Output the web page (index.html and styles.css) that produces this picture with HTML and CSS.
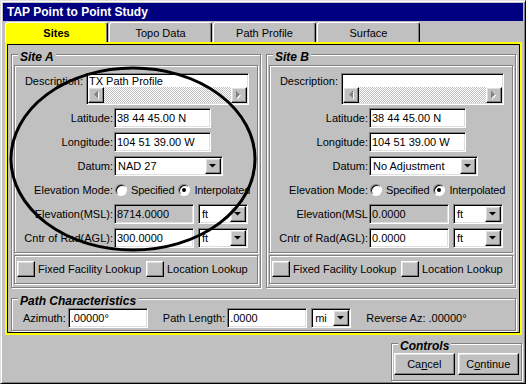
FILE: index.html
```html
<!DOCTYPE html>
<html lang="en">
<head>
  <meta charset="UTF-8" />
  <title>TAP Point to Point Study</title>
  <link rel="stylesheet" href="styles.css">
</head>
<body>

<div class="window">
  <div class="titlebar">TAP Point to Point Study</div>

  <div class="tabs">
    <div class="tab active">Sites</div>
    <div class="tab">Topo Data</div>
    <div class="tab">Path Profile</div>
    <div class="tab">Surface</div>
  </div>

  <div class="panel">
    <div class="sites">

      <!-- Site A -->
      <div class="group site">
        <span class="legend">Site A</span>
        <div class="frame fields">
          <div class="desc-row">
            <span class="desc-label">Description:</span>
            <div class="desc-box">
              <div class="desc-text">TX Path Profile</div>
              <div class="hscroll">
                <span class="raised sbtn">
                  <svg width="14" height="14" viewBox="0 0 14 14"><polygon points="6,7.5 10,3.5 10,11.5" fill="#fff"/><polygon points="5,6.5 9,2.5 9,10.5" fill="#808080"/></svg>
                </span>
                <span class="track"></span>
                <span class="raised sbtn">
                  <svg width="14" height="14" viewBox="0 0 14 14"><polygon points="9,7.5 5,3.5 5,11.5" fill="#fff"/><polygon points="8,6.5 4,2.5 4,10.5" fill="#808080"/></svg>
                </span>
              </div>
            </div>
          </div>
          <div class="grid">
            <label>Latitude:</label>
            <input class="field w-coord" type="text" value="38 44 45.00 N" />
            <label>Longitude:</label>
            <input class="field w-coord" type="text" value="104 51 39.00 W" />
            <label>Datum:</label>
            <div class="combo w-datum"><span>NAD 27</span><span class="raised drop"><svg width="14" height="14" viewBox="0 0 14 14"><polygon points="3,5 10,5 6.5,8.5"/></svg></span></div>
            <label>Elevation Mode:</label>
            <div class="radios">
              <span class="radio"></span><span class="rlabel">Specified</span>
              <span class="radio on"></span><span>Interpolated</span>
            </div>
            <label>Elevation(MSL):</label>
            <div class="pair">
              <input class="field w-num disabled" type="text" value="8714.0000" readonly />
              <div class="combo w-unit"><span>ft</span><span class="raised drop"><svg width="14" height="14" viewBox="0 0 14 14"><polygon points="3,5 10,5 6.5,8.5"/></svg></span></div>
            </div>
            <label>Cntr of Rad(AGL):</label>
            <div class="pair">
              <input class="field w-num" type="text" value="300.0000" />
              <div class="combo w-unit"><span>ft</span><span class="raised drop"><svg width="14" height="14" viewBox="0 0 14 14"><polygon points="3,5 10,5 6.5,8.5"/></svg></span></div>
            </div>
          </div>
        </div>
        <div class="frame lookups">
          <span class="lookup first"><span class="raised sq"></span>Fixed Facility Lookup</span>
          <span class="lookup"><span class="raised sq"></span>Location Lookup</span>
        </div>
      </div>

      <!-- Site B -->
      <div class="group site">
        <span class="legend">Site B</span>
        <div class="frame fields">
          <div class="desc-row">
            <span class="desc-label">Description:</span>
            <div class="desc-box">
              <div class="desc-text"></div>
              <div class="hscroll">
                <span class="raised sbtn">
                  <svg width="14" height="14" viewBox="0 0 14 14"><polygon points="6,7.5 10,3.5 10,11.5" fill="#fff"/><polygon points="5,6.5 9,2.5 9,10.5" fill="#808080"/></svg>
                </span>
                <span class="track"></span>
                <span class="raised sbtn">
                  <svg width="14" height="14" viewBox="0 0 14 14"><polygon points="9,7.5 5,3.5 5,11.5" fill="#fff"/><polygon points="8,6.5 4,2.5 4,10.5" fill="#808080"/></svg>
                </span>
              </div>
            </div>
          </div>
          <div class="grid">
            <label>Latitude:</label>
            <input class="field w-coord" type="text" value="38 44 45.00 N" />
            <label>Longitude:</label>
            <input class="field w-coord" type="text" value="104 51 39.00 W" />
            <label>Datum:</label>
            <div class="combo w-datum"><span>No Adjustment</span><span class="raised drop"><svg width="14" height="14" viewBox="0 0 14 14"><polygon points="3,5 10,5 6.5,8.5"/></svg></span></div>
            <label>Elevation Mode:</label>
            <div class="radios">
              <span class="radio"></span><span class="rlabel">Specified</span>
              <span class="radio on"></span><span>Interpolated</span>
            </div>
            <label>Elevation(MSL</label>
            <div class="pair">
              <input class="field w-num disabled" type="text" value="0.0000" readonly />
              <div class="combo w-unit"><span>ft</span><span class="raised drop"><svg width="14" height="14" viewBox="0 0 14 14"><polygon points="3,5 10,5 6.5,8.5"/></svg></span></div>
            </div>
            <label>Cntr of Rad(AGL):</label>
            <div class="pair">
              <input class="field w-num" type="text" value="0.0000" />
              <div class="combo w-unit"><span>ft</span><span class="raised drop"><svg width="14" height="14" viewBox="0 0 14 14"><polygon points="3,5 10,5 6.5,8.5"/></svg></span></div>
            </div>
          </div>
        </div>
        <div class="frame lookups">
          <span class="lookup first"><span class="raised sq"></span>Fixed Facility Lookup</span>
          <span class="lookup"><span class="raised sq"></span>Location Lookup</span>
        </div>
      </div>

    </div>

    <div class="group path">
      <span class="legend">Path Characteristics</span>
      <div class="path-row">
        <span>Azimuth:</span>
        <input class="field w-num az" type="text" value=".00000°" />
        <span class="len-label">Path Length:</span>
        <input class="field w-num len" type="text" value=".0000" />
        <div class="combo w-mi"><span>mi</span><span class="raised drop"><svg width="14" height="14" viewBox="0 0 14 14"><polygon points="3,5 10,5 6.5,8.5"/></svg></span></div>
        <span class="rev">Reverse Az: .00000°</span>
      </div>
    </div>
  </div>

  <div class="bottom">
    <div class="group controls">
      <span class="legend">Controls</span>
      <button class="raised btn cancel">Ca<u>n</u>cel</button>
      <button class="raised btn cont">C<u>o</u>ntinue</button>
    </div>
  </div>

  <svg class="mark" width="526" height="384" viewBox="0 0 526 384">
    <ellipse cx="133" cy="159" rx="122" ry="91" fill="none" stroke="#000" stroke-width="3"/>
  </svg>
</div>

</body>
</html>
```

FILE: styles.css
```css
* {
  box-sizing: border-box;
}

body {
  margin: 0;
  background: #c0c0c0;
  font-family: "Liberation Sans", Arial, sans-serif;
  font-size: 11px;
  color: #000;
}

.window {
  position: relative;
  width: 526px;
  height: 384px;
  padding: 2px;
  border: 1px solid;
  border-color: #dfdfdf #000 #000 #dfdfdf;
  box-shadow: inset 1px 1px 0 #fff, inset -1px -1px 0 #808080;
}

.titlebar {
  height: 18px;
  padding-left: 4px;
  background: #000080;
  color: #fff;
  font-size: 12px;
  font-weight: bold;
  line-height: 18px;
}

/* tabs */
.tabs {
  display: flex;
  gap: 1px;
  margin: 1px 0 0 2px;
}

.tab {
  width: 103px;
  height: 20px;
  padding-top: 1px;
  border: 1px solid;
  border-bottom: 0;
  border-color: #fff #000 transparent #fff;
  border-radius: 3px 3px 0 0;
  box-shadow: inset -1px 0 0 #808080;
  text-align: center;
  line-height: 19px;
}

.tab.active {
  background: #ffff00;
  font-weight: bold;
}

.panel {
  height: 293px;
  margin: 0 1px 0 2px;
  padding: 10px 4px 2px;
  border: 2px solid #ffff00;
  box-shadow: inset 1px 1px 0 #000, inset -1px -1px 0 #000;
}

.sites {
  display: flex;
  gap: 5px;
}

/* etched group boxes */
.group,
.frame {
  border: 1px solid #808080;
  box-shadow: inset 1px 1px 0 #fff, 1px 1px 0 #fff;
}

.group {
  position: relative;
}

.legend {
  position: absolute;
  top: -5px;
  left: 6px;
  padding: 0 2px;
  background: #c0c0c0;
  font-size: 12px;
  font-style: italic;
  font-weight: bold;
  line-height: 14px;
}

.site {
  width: 250px;
  height: 234px;
  padding: 10px 2px 0;
}

.fields {
  height: 188px;
  padding-top: 7px;
}

.desc-row {
  display: flex;
  gap: 3px;
}

.desc-label {
  width: 68px;
  margin-top: 2px;
  text-align: right;
  line-height: 12px;
}

.desc-box {
  width: 163px;
  height: 32px;
  border: 1px solid;
  border-color: #808080 #fff #fff #808080;
  box-shadow: inset 1px 1px 0 #000, inset -1px -1px 0 #dfdfdf;
  background: #fff;
  padding: 1px;
}

.desc-text {
  height: 12px;
  padding-left: 1px;
  line-height: 12px;
}

.hscroll {
  display: flex;
  height: 16px;
}

.track {
  flex: 1;
  background: repeating-conic-gradient(#c0c0c0 0 25%, #fff 0 50%) 0 0 / 2px 2px;
}

.raised {
  background: #c0c0c0;
  border: 1px solid;
  border-color: #fff #000 #000 #fff;
  box-shadow: inset -1px -1px 0 #808080, inset 1px 1px 0 #dfdfdf;
}

.sbtn,
.drop {
  display: block;
  width: 16px;
  height: 16px;
}

.sbtn svg,
.drop svg {
  display: block;
}

.grid {
  display: grid;
  grid-template-columns: 98px auto;
  column-gap: 1px;
  row-gap: 4px;
  margin-top: 3px;
  align-items: center;
  justify-items: start;
}

.grid label {
  justify-self: end;
  line-height: 20px;
  white-space: nowrap;
}

.field {
  height: 20px;
  margin: 0;
  padding: 0 2px;
  border: 1px solid;
  border-color: #808080 #fff #fff #808080;
  box-shadow: inset 1px 1px 0 #000, inset -1px -1px 0 #dfdfdf;
  background: #fff;
  font: inherit;
  color: #000;
  outline: none;
}

.field.disabled {
  background: #c0c0c0;
}

.w-coord { width: 97px; }
.w-datum { width: 109px; }
.w-num { width: 80px; }
.w-unit { width: 50px; }
.w-mi { width: 40px; }

.combo {
  display: flex;
  justify-content: space-between;
  align-items: center;
  height: 20px;
  padding: 1px 1px 1px 3px;
  border: 1px solid;
  border-color: #808080 #fff #fff #808080;
  box-shadow: inset 1px 1px 0 #000, inset -1px -1px 0 #dfdfdf;
  background: #fff;
}

.pair {
  display: flex;
  gap: 4px;
}

.radios {
  display: flex;
  align-items: center;
  height: 20px;
  margin-left: 1px;
  letter-spacing: -0.2px;
}

.radio {
  position: relative;
  width: 12px;
  height: 12px;
  margin-right: 4px;
  border: 1px solid;
  border-color: #808080 #fff #fff #808080;
  border-radius: 50%;
  box-shadow: inset 1px 1px 0 #000;
  background: #fff;
}

.radio.on::after {
  content: "";
  position: absolute;
  left: 3px;
  top: 3px;
  width: 4px;
  height: 4px;
  border-radius: 50%;
  background: #000;
}

.rlabel {
  margin-right: 4px;
}

.lookups {
  display: flex;
  align-items: center;
  height: 29px;
  margin-top: 2px;
  padding: 0 2px 1px;
}

.lookup {
  display: flex;
  align-items: center;
  gap: 3px;
}

.lookup.first {
  width: 129px;
}

.sq {
  width: 18px;
  height: 16px;
}

/* path characteristics */
.path {
  height: 33px;
  margin-top: 10px;
  padding: 9px 0 0 11px;
}

.path-row {
  display: flex;
  align-items: center;
}

.az {
  margin-left: 2px;
}

.len-label {
  margin-left: 15px;
}

.len {
  margin: 0 4px 0 2px;
}

.rev {
  margin-left: 15px;
}

/* controls */
.bottom {
  display: flex;
  justify-content: flex-end;
  margin-top: 8px;
  padding-right: 1px;
}

.controls {
  display: flex;
  gap: 3px;
  width: 131px;
  height: 38px;
  padding: 9px 2px 0;
}

.btn {
  height: 22px;
  padding: 0;
  font: inherit;
  color: #000;
}

.btn.cancel { width: 61px; }
.btn.cont { width: 62px; }

.mark {
  position: absolute;
  left: -1px;
  top: -1px;
  pointer-events: none;
}
```
